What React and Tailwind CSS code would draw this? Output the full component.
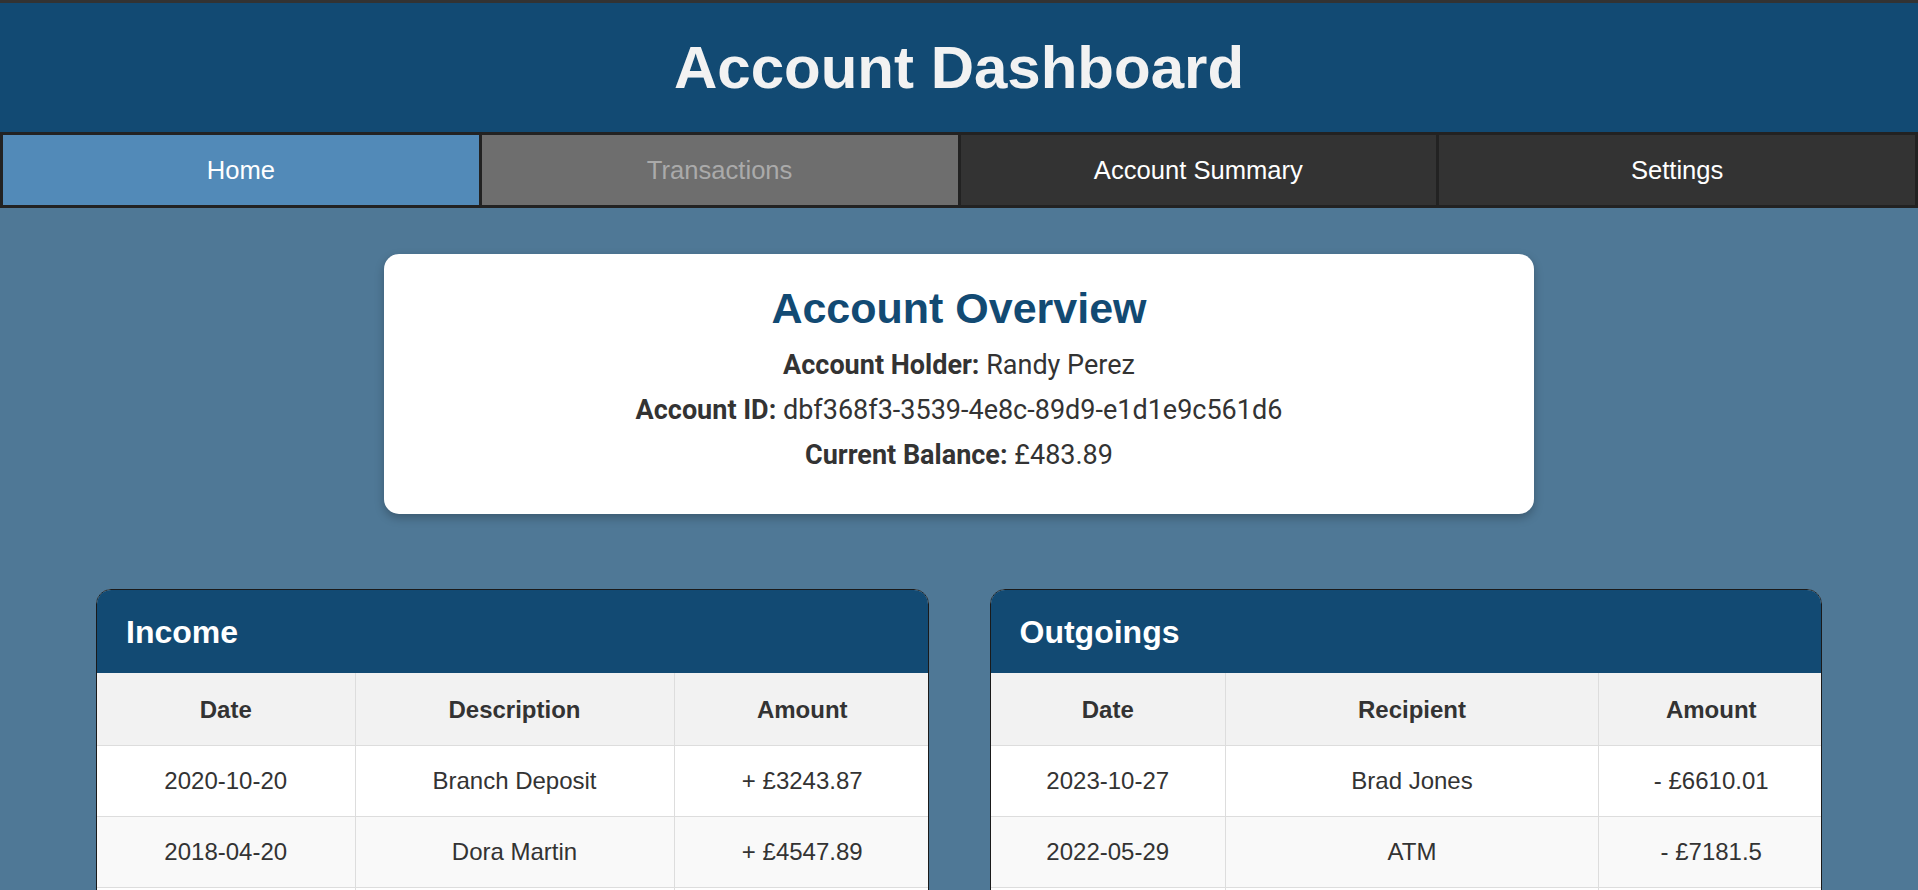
import React from 'react';

// Tab bar entries
const NAV_ITEMS = [
  { label: 'Home', state: 'active' },
  { label: 'Transactions', state: 'hover' },
  { label: 'Account Summary', state: 'idle' },
  { label: 'Settings', state: 'idle' },
];

const INCOME = [
  { date: '2020-10-20', desc: 'Branch Deposit', amount: '+ £3243.87' },
  { date: '2018-04-20', desc: 'Dora Martin', amount: '+ £4547.89' },
  { date: '2017-02-11', desc: 'Salary', amount: '+ £2180.40' },
  { date: '2016-08-03', desc: 'Refund', amount: '+ £96.12' },
];

const OUTGOINGS = [
  { date: '2023-10-27', desc: 'Brad Jones', amount: '- £6610.01' },
  { date: '2022-05-29', desc: 'ATM', amount: '- £7181.5' },
  { date: '2021-03-14', desc: 'Council Tax', amount: '- £142.3' },
  { date: '2019-12-02', desc: 'Grocer', amount: '- £58.77' },
];

function NavItem({ label, state }) {
  const styles = {
    active: 'bg-[#528ab8] text-white',
    hover: 'bg-[#6e6e6e] text-[#aaaaaa]',
    idle: 'bg-[#333333] text-white',
  };
  return (
    <div className={`flex items-center justify-center h-[70px] text-[25.6px] ${styles[state]}`}>
      {label}
    </div>
  );
}

function TxPanel({ title, middle, rows, widths }) {
  return (
    <div className="flex-1 rounded-t-[15px] border border-[#1a1a1a] overflow-hidden bg-white">
      <div className="h-[83px] bg-[#124a73] flex items-center pl-[29px]">
        <h2 className="text-[32px] font-bold text-white leading-none">{title}</h2>
      </div>
      <table className="w-full table-fixed border-collapse text-[24px] text-[#333333]">
        <colgroup>
          <col style={{ width: widths[0] }} />
          <col style={{ width: widths[1] }} />
          <col style={{ width: widths[2] }} />
        </colgroup>
        <thead>
          <tr className="bg-[#f2f2f2] h-[72px]">
            <th className="border border-[#dddddd] border-t-0 border-l-0 font-bold pt-[2px]">Date</th>
            <th className="border border-[#dddddd] border-t-0 font-bold pt-[2px]">{middle}</th>
            <th className="border border-[#dddddd] border-t-0 border-r-0 font-bold pt-[2px]">Amount</th>
          </tr>
        </thead>
        <tbody>
          {rows.map((r, i) => (
            <tr key={i} className={`h-[71px] ${i % 2 === 1 ? 'bg-[#f9f9f9]' : 'bg-white'}`}>
              <td className="border border-[#dddddd] border-l-0 text-center">{r.date}</td>
              <td className="border border-[#dddddd] text-center">{r.desc}</td>
              <td className="border border-[#dddddd] border-r-0 text-center">{r.amount}</td>
            </tr>
          ))}
        </tbody>
      </table>
    </div>
  );
}

export default function App() {
  return (
    <div className="min-h-screen bg-[#4f7896] font-['Liberation_Sans',Arial,sans-serif]">
      {/* Header */}
      <header className="border-t-[3px] border-[#333333] bg-[#124a73] h-[132px] flex items-center justify-center">
        <h1 className="text-[60px] font-bold text-[#f2f2f2] leading-none">Account Dashboard</h1>
      </header>

      {/* Tabs */}
      <nav className="grid grid-cols-4 gap-[3px] p-[3px] bg-[#222222]">
        {NAV_ITEMS.map((item) => (
          <NavItem key={item.label} {...item} />
        ))}
      </nav>

      {/* Overview card */}
      <section className="mx-auto mt-[46px] w-[60%] bg-white rounded-[15px] shadow-[0_4px_10px_rgba(0,0,0,0.25)] pt-[30px] pb-[36px] text-center">
        <h2 className="text-[43px] font-bold text-[#124a73] leading-[48px]">Account Overview</h2>
        <div className="mt-[11px] font-['Roboto',sans-serif] text-[27px] text-[#333333] leading-[45px]">
          <p><span className="font-bold">Account Holder:</span> Randy Perez</p>
          <p><span className="font-bold">Account ID:</span> dbf368f3-3539-4e8c-89d9-e1d1e9c561d6</p>
          <p><span className="font-bold">Current Balance:</span> £483.89</p>
        </div>
      </section>

      {/* Income / Outgoings */}
      <div className="flex gap-[61px] px-[96px] mt-[75px] pb-10">
        <TxPanel title="Income" middle="Description" rows={INCOME} widths={['258px', '319px', '256px']} />
        <TxPanel title="Outgoings" middle="Recipient" rows={OUTGOINGS} widths={['235px', '373px', '225px']} />
      </div>
    </div>
  );
}
